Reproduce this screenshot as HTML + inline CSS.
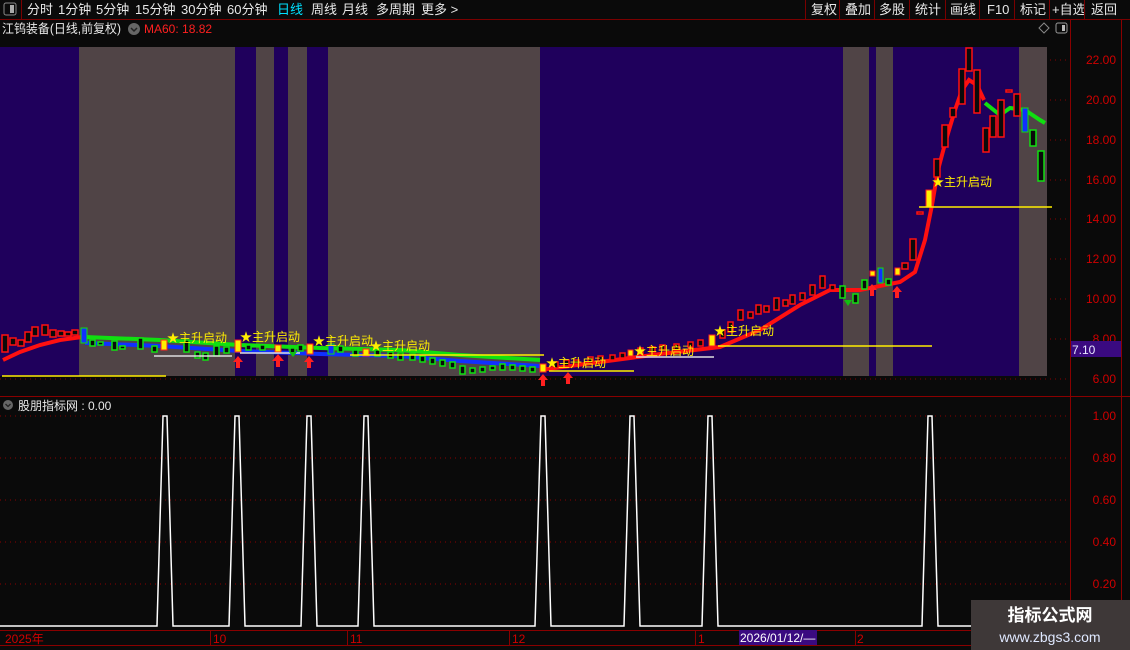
<!DOCTYPE html>
<html><head><meta charset="utf-8"><style>
body{margin:0;width:1130px;height:650px;background:#0a0a0a;overflow:hidden;font-family:"Liberation Sans","Noto Sans CJK SC",sans-serif;}
svg{position:absolute;left:0;top:0}
text{font-family:"Liberation Sans","Noto Sans CJK SC",sans-serif}
</style></head><body>
<svg width="1130" height="650" viewBox="0 0 1130 650">
<rect x="0" y="0" width="1130" height="19" fill="#0a0a0a"/>
<line x1="0" y1="19.5" x2="1130" y2="19.5" stroke="#7a0000"/>
<rect x="4" y="3" width="12" height="12" fill="none" stroke="#888" rx="2"/><rect x="10" y="5" width="4" height="8" fill="#aaa"/>
<line x1="21.5" y1="0" x2="21.5" y2="19" stroke="#7a0000"/>
<g font-size="13" fill="#e8e8e8">
<text x="27" y="14">分时</text><text x="58" y="14">1分钟</text><text x="96" y="14">5分钟</text><text x="135" y="14">15分钟</text><text x="181" y="14">30分钟</text><text x="227" y="14">60分钟</text>
<text x="277" y="14" fill="#00e0ff">日线</text><text x="311" y="14">周线</text><text x="342" y="14">月线</text><text x="376" y="14">多周期</text><text x="421" y="14">更多 &gt;</text>
<text x="811" y="14">复权</text><text x="845" y="14">叠加</text><text x="879" y="14">多股</text><text x="915" y="14">统计</text><text x="950" y="14">画线</text><text x="987" y="14">F10</text><text x="1020" y="14">标记</text><text x="1052" y="14">+自选</text><text x="1091" y="14">返回</text>
</g>
<g stroke="#7a0000"><line x1="805.5" y1="0" x2="805.5" y2="19"/><line x1="839.5" y1="0" x2="839.5" y2="19"/><line x1="874.5" y1="0" x2="874.5" y2="19"/><line x1="909.5" y1="0" x2="909.5" y2="19"/><line x1="945.5" y1="0" x2="945.5" y2="19"/><line x1="979.5" y1="0" x2="979.5" y2="19"/><line x1="1014.5" y1="0" x2="1014.5" y2="19"/><line x1="1049.5" y1="0" x2="1049.5" y2="19"/><line x1="1084.5" y1="0" x2="1084.5" y2="19"/></g>
<text x="2" y="33" font-size="12.5" fill="#e8e8e8" textLength="119" lengthAdjust="spacingAndGlyphs">江钨装备(日线,前复权)</text>
<circle cx="134" cy="29" r="6" fill="#666"/><path d="M131 28l3 3 3-3" stroke="#222" fill="none" stroke-width="1.5"/>
<text x="144" y="33" font-size="12" fill="#ff2020">MA60: 18.82</text>
<path d="M1044 23l5 5-5 5-5-5z" stroke="#888" fill="none"/><rect x="1056" y="23" width="11" height="10" fill="none" stroke="#999" rx="2"/><rect x="1062" y="25" width="3" height="6" fill="#bbb"/>
<rect x="0" y="47" width="1047" height="329" fill="#1f005c"/>
<g fill="#504446"><rect x="79" y="47" width="156" height="329"/><rect x="256" y="47" width="18" height="329"/><rect x="288" y="47" width="19" height="329"/><rect x="328" y="47" width="212" height="329"/><rect x="843" y="47" width="26" height="329"/><rect x="876" y="47" width="17" height="329"/><rect x="1019" y="47" width="28" height="329"/></g>
<line x1="1070.5" y1="20" x2="1070.5" y2="630" stroke="#8a0000"/>
<line x1="1121.5" y1="20" x2="1121.5" y2="630" stroke="#8a0000"/>
<line x1="0" y1="396.5" x2="1130" y2="396.5" stroke="#8a0000"/>
<g stroke="#8a0000" stroke-dasharray="1,4"><line x1="1050" y1="60" x2="1066" y2="60"/><line x1="1050" y1="100" x2="1066" y2="100"/><line x1="1050" y1="140" x2="1066" y2="140"/><line x1="1050" y1="180" x2="1066" y2="180"/><line x1="1050" y1="219" x2="1066" y2="219"/><line x1="1050" y1="259" x2="1066" y2="259"/><line x1="1050" y1="299" x2="1066" y2="299"/><line x1="1050" y1="339" x2="1066" y2="339"/><line x1="0" y1="379" x2="1066" y2="379"/></g>
<g font-size="12" fill="#d00000" text-anchor="end"><text x="1116" y="64">22.00</text><text x="1116" y="104">20.00</text><text x="1116" y="144">18.00</text><text x="1116" y="184">16.00</text><text x="1116" y="223">14.00</text><text x="1116" y="263">12.00</text><text x="1116" y="303">10.00</text><text x="1116" y="343">8.00</text><text x="1116" y="383">6.00</text></g>
<rect x="1071" y="341" width="50" height="16" fill="#3a0a80"/><text x="1072" y="354" font-size="12" fill="#e8e8ff">7.10</text>
<polyline points="3,360 20,352 40,345 60,340 82,337" fill="none" stroke="#ff1010" stroke-width="4"/>
<polyline points="85,343 160,346 240,351 320,354 400,356 460,361 540,366" fill="none" stroke="#1030ff" stroke-width="4"/>
<polyline points="85,337 160,340 240,345 320,348 400,350 460,355 540,360" fill="none" stroke="#10e010" stroke-width="4"/>
<polyline points="540,370 600,362 660,354 720,347 760,330 800,305 830,290 860,290 900,282 915,272 925,240 932,205 938,170 946,140 955,110 962,90 969,80 977,85 984,100" fill="none" stroke="#ff1010" stroke-width="4"/>
<polyline points="985,103 1000,115 1010,108 1025,110 1040,120 1045,123" fill="none" stroke="#10e010" stroke-width="4"/>
<g fill="#0a0a0a" stroke="#ff1010" stroke-width="1.5">
<rect x="2" y="335" width="6" height="17"/><rect x="10" y="338" width="6" height="7"/><rect x="18" y="340" width="6" height="6"/><rect x="25" y="332" width="6" height="10"/><rect x="32" y="327" width="6" height="9"/><rect x="42" y="325" width="6" height="10"/><rect x="50" y="330" width="6" height="7"/><rect x="58" y="331" width="6" height="5"/><rect x="65" y="332" width="6" height="4"/><rect x="72" y="330" width="6" height="5"/>
<rect x="553" y="362" width="5" height="6"/><rect x="564" y="360" width="5" height="6"/><rect x="574" y="360" width="5" height="4"/><rect x="588" y="357" width="5" height="6"/><rect x="598" y="356" width="5" height="5"/><rect x="610" y="355" width="5" height="5"/><rect x="620" y="353" width="5" height="5"/><rect x="638" y="348" width="5" height="6"/><rect x="650" y="347" width="5" height="5"/><rect x="660" y="345" width="5" height="5"/><rect x="674" y="344" width="5" height="6"/><rect x="688" y="342" width="5" height="5"/><rect x="698" y="340" width="5" height="6"/><rect x="720" y="330" width="5" height="8"/><rect x="728" y="322" width="5" height="10"/><rect x="738" y="310" width="5" height="10"/><rect x="748" y="312" width="5" height="6"/><rect x="756" y="305" width="5" height="9"/><rect x="764" y="306" width="5" height="6"/><rect x="774" y="298" width="5" height="12"/><rect x="783" y="300" width="5" height="6"/><rect x="790" y="295" width="5" height="9"/><rect x="800" y="293" width="5" height="7"/><rect x="810" y="285" width="5" height="10"/><rect x="820" y="276" width="5" height="12"/><rect x="830" y="285" width="5" height="5"/>
<rect x="902" y="263" width="6" height="6"/><rect x="910" y="239" width="6" height="21"/><rect x="917" y="212" width="6" height="2"/><rect x="934" y="159" width="6" height="18"/><rect x="942" y="125" width="6" height="22"/><rect x="950" y="108" width="6" height="9"/><rect x="959" y="69" width="6" height="35"/><rect x="966" y="48" width="6" height="23"/><rect x="974" y="70" width="6" height="43"/><rect x="983" y="128" width="6" height="24"/><rect x="990" y="116" width="6" height="21"/><rect x="998" y="100" width="6" height="37"/><rect x="1006" y="90" width="6" height="2"/><rect x="1014" y="94" width="6" height="22"/>
</g>
<g fill="#0a0a0a" stroke="#10e010" stroke-width="1.5">
<rect x="90" y="340" width="5" height="6"/><rect x="98" y="342" width="5" height="3"/><rect x="112" y="341" width="5" height="9"/><rect x="120" y="346" width="5" height="3"/><rect x="138" y="338" width="5" height="11"/><rect x="152" y="346" width="5" height="6"/><rect x="184" y="340" width="5" height="12"/><rect x="195" y="352" width="5" height="6"/><rect x="203" y="353" width="5" height="7"/><rect x="214" y="346" width="5" height="10"/><rect x="224" y="347" width="5" height="6"/><rect x="246" y="345" width="5" height="5"/><rect x="260" y="345" width="5" height="5"/><rect x="290" y="348" width="5" height="5"/><rect x="298" y="345" width="5" height="6"/><rect x="338" y="346" width="5" height="6"/><rect x="353" y="350" width="5" height="6"/><rect x="375" y="350" width="5" height="6"/><rect x="388" y="352" width="5" height="6"/><rect x="398" y="353" width="5" height="7"/><rect x="410" y="354" width="5" height="6"/><rect x="420" y="356" width="5" height="6"/><rect x="430" y="358" width="5" height="6"/><rect x="440" y="360" width="5" height="6"/><rect x="450" y="362" width="5" height="6"/><rect x="460" y="366" width="5" height="8"/><rect x="470" y="368" width="5" height="5"/><rect x="480" y="367" width="5" height="5"/><rect x="490" y="366" width="5" height="4"/><rect x="500" y="364" width="5" height="6"/><rect x="510" y="365" width="5" height="5"/><rect x="520" y="366" width="5" height="5"/><rect x="530" y="367" width="5" height="5"/>
<rect x="840" y="286" width="5" height="12"/><rect x="853" y="294" width="5" height="9"/><rect x="862" y="280" width="5" height="9"/><rect x="886" y="279" width="5" height="6"/><rect x="1030" y="130" width="6" height="16"/><rect x="1038" y="151" width="6" height="30"/>
</g>
<g fill="#1030ff" stroke="#10e010"><rect x="81" y="328" width="6" height="15"/><rect x="328" y="344" width="6" height="10"/><rect x="878" y="268" width="5" height="15"/><rect x="1022" y="108" width="6" height="24"/></g>
<g fill="#ffee00" stroke="#ff2020"><rect x="161" y="340" width="6" height="10"/><rect x="235" y="340" width="6" height="12"/><rect x="275" y="345" width="6" height="7"/><rect x="307" y="344" width="6" height="10"/><rect x="363" y="349" width="6" height="7"/><rect x="540" y="364" width="6" height="8"/><rect x="628" y="350" width="5" height="6"/><rect x="709" y="335" width="6" height="11"/><rect x="870" y="271" width="5" height="5"/><rect x="895" y="268" width="5" height="7"/><rect x="926" y="190" width="6" height="17"/></g>
<g stroke-width="1.5"><line x1="2" y1="376" x2="166" y2="376" stroke="#ffee00"/><line x1="549" y1="371" x2="634" y2="371" stroke="#ffee00"/><line x1="636" y1="357" x2="714" y2="357" stroke="#ddd"/><line x1="718" y1="346" x2="932" y2="346" stroke="#ffee00"/><line x1="919" y1="207" x2="1052" y2="207" stroke="#ffee00"/><line x1="154" y1="356" x2="232" y2="356" stroke="#ddd"/><line x1="240" y1="353" x2="300" y2="353" stroke="#ddd"/><line x1="350" y1="355" x2="544" y2="355" stroke="#ffee00"/></g>
<g fill="#ff2020"><path d="M238 356l-5 6h3v6h4v-6h3z"/><path d="M278 354l-6 7h4v6h4v-6h4z"/><path d="M309 356l-5 6h3v6h4v-6h3z"/><path d="M543 374l-5 6h3v6h4v-6h3z"/><path d="M568 372l-5 6h3v6h4v-6h3z"/><path d="M872 284l-5 6h3v6h4v-6h3z"/><path d="M897 286l-5 6h3v6h4v-6h3z"/></g>
<g fill="#10c010"><path d="M289 352h8l-4 5z"/><path d="M844 300h8l-4 6z"/></g>
<g font-size="12" fill="#ffee00"><text x="167" y="342">★主升启动</text><text x="240" y="341">★主升启动</text><text x="313" y="345">★主升启动</text><text x="370" y="350">★主升启动</text><text x="546" y="367">★主升启动</text><text x="634" y="355">★主升启动</text><text x="714" y="335">★主升启动</text><text x="932" y="186">★主升启动</text></g>
<circle cx="8" cy="405" r="5" fill="#666"/><path d="M5.5 404l2.5 2.5 2.5-2.5" stroke="#222" fill="none" stroke-width="1.3"/>
<text x="18" y="410" font-size="12" fill="#e8e8e8">股朋指标网 : 0.00</text>
<g stroke="#8a0000" stroke-dasharray="1,4"><line x1="0" y1="416" x2="1066" y2="416"/><line x1="0" y1="458" x2="1066" y2="458"/><line x1="0" y1="500" x2="1066" y2="500"/><line x1="0" y1="542" x2="1066" y2="542"/><line x1="0" y1="584" x2="1066" y2="584"/></g>
<g font-size="12" fill="#d00000" text-anchor="end"><text x="1116" y="420">1.00</text><text x="1116" y="462">0.80</text><text x="1116" y="504">0.60</text><text x="1116" y="546">0.40</text><text x="1116" y="588">0.20</text></g>
<polyline fill="none" stroke="#fff" stroke-width="1.5" points="0,626 157,626 163,416 167,416 173,626 229,626 235,416 239,416 245,626 301,626 307,416 311,416 317,626 358,626 364,416 368,416 374,626 535,626 541,416 545,416 551,626 624,626 630,416 634,416 640,626 702,626 708,416 712,416 718,626 922,626 928,416 932,416 938,626 1066,626"/>
<line x1="0" y1="630.5" x2="1130" y2="630.5" stroke="#8a0000"/>
<line x1="0" y1="645.5" x2="1130" y2="645.5" stroke="#8a0000"/>
<g stroke="#8a0000"><line x1="210.5" y1="630" x2="210.5" y2="645"/><line x1="347.5" y1="630" x2="347.5" y2="645"/><line x1="509.5" y1="630" x2="509.5" y2="645"/><line x1="695.5" y1="630" x2="695.5" y2="645"/><line x1="855.5" y1="630" x2="855.5" y2="645"/></g>
<g font-size="12" fill="#d00000"><text x="5" y="643">2025年</text><text x="213" y="643">10</text><text x="350" y="643">11</text><text x="512" y="643">12</text><text x="698" y="643">1</text><text x="857" y="643">2</text></g>
<rect x="739" y="630" width="78" height="15" fill="#3a0a80"/><text x="740" y="642" font-size="12" fill="#fff">2026/01/12/—</text>
<rect x="971" y="600" width="159" height="50" fill="#3e3838"/>
<text x="1050" y="621" font-size="17" font-weight="bold" fill="#fff" text-anchor="middle">指标公式网</text>
<text x="1050" y="642" font-size="14" fill="#dfe8ff" text-anchor="middle">www.zbgs3.com</text>
</svg>
</body></html>
